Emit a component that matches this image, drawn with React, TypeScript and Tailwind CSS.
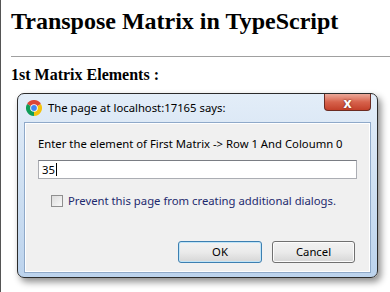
import React from "react";

const ChromeIcon = () => (
  <svg width="16" height="16" viewBox="0 0 16 16">
    <path d="M8 8 L1.07 4 A8 8 0 0 1 14.93 4 Z" fill="#db4437" />
    <path d="M8 8 L14.93 4 A8 8 0 0 1 8 16 Z" fill="#f4c20d" />
    <path d="M8 8 L8 16 A8 8 0 0 1 1.07 4 Z" fill="#0f9d58" />
    <circle cx="8" cy="8" r="3.8" fill="#fff" />
    <circle cx="8" cy="8" r="2.9" fill="#4285f4" />
  </svg>
);

export default function App() {
  return (
    <div className="h-[292px] w-[390px] overflow-hidden border-l border-[#555] bg-white pl-[10px]">
      <h1 className="mt-[7px] text-[24px] font-bold leading-[28px] text-black [font-family:'Liberation_Serif',serif]">
        Transpose Matrix in TypeScript
      </h1>
      <hr className="mt-[21px] border-t border-[#a0a0a0]" />
      <h2 className="mt-[8px] text-[16px] font-bold leading-[20px] text-black [font-family:'Liberation_Serif',serif]">
        1st Matrix Elements :
      </h2>

      <div className="mt-[8px] ml-[6px] flex h-[185px] w-[361px] flex-col rounded-[7px] border border-[#2b2b2b] bg-gradient-to-b from-[#e3edf8] via-[#cfe0f2] to-[#bcd3ed] px-[6px] pb-[4px] shadow-[3px_4px_7px_rgba(0,0,0,0.45)] [font-family:'Noto_Sans',sans-serif]">
        <div className="flex h-[28px] items-start">
          <div className="mt-[6px] ml-[2px] flex items-center gap-[6px]">
            <ChromeIcon />
            <span className="whitespace-nowrap text-[11.3px] leading-[16px] text-black">The page at localhost:17165 says:</span>
          </div>
          <div className="ml-auto flex h-[17px] w-[47px] items-center justify-center rounded-b-[4px] border border-t-0 border-[#6b2b22] bg-gradient-to-b from-[#eaa899] via-[#d7624c] to-[#c3402a]">
            <span className="text-[14px] font-bold leading-[13px] text-white [text-shadow:0_0_2px_#5a1a10]">x</span>
          </div>
        </div>

        <div className="flex flex-1 flex-col border border-[#8fa9c9] bg-[#f0f0f0] px-[13px] pt-[13px] shadow-[inset_0_0_0_1px_#fff]">
          <p className="whitespace-nowrap text-[11.3px] leading-[16px] text-black">
            Enter the element of First Matrix -&gt; Row 1 And Coloumn 0
          </p>
          <div className="mt-[8px] flex h-[19px] w-[319px] items-center border border-[#abadb3] border-t-[#7a7d84] bg-white pl-[3px]">
            <span className="text-[11.3px] leading-[14px] text-black">35</span>
            <span className="ml-[1px] h-[13px] w-px bg-black" />
          </div>
          <div className="mt-[15px] ml-[13px] flex items-center gap-[5px]">
            <span className="h-[12px] w-[12px] border border-[#8f8f8f] bg-gradient-to-br from-[#dcdcdc] to-[#f8f8f8]" />
            <span className="whitespace-nowrap text-[11.3px] leading-[14px] text-[#1e2a6e]">Prevent this page from creating additional dialogs.</span>
          </div>
          <div className="mt-auto mb-[9px] flex justify-end gap-[10px] pr-[2px]">
            <div className="flex h-[22px] w-[84px] items-center justify-center rounded-[3px] border border-[#3c7fb1] bg-gradient-to-b from-[#f2f2f2] via-[#ebebeb] to-[#d6d6d6] shadow-[inset_0_0_0_1px_#c0e4f7]">
              <span className="text-[11.3px] leading-[14px] text-black">OK</span>
            </div>
            <div className="flex h-[22px] w-[83px] items-center justify-center rounded-[3px] border border-[#707070] bg-gradient-to-b from-[#f2f2f2] via-[#ebebeb] to-[#d6d6d6] shadow-[inset_0_0_0_1px_#fcfcfc]">
              <span className="text-[11.3px] leading-[14px] text-black">Cancel</span>
            </div>
          </div>
        </div>
      </div>
    </div>
  );
}
